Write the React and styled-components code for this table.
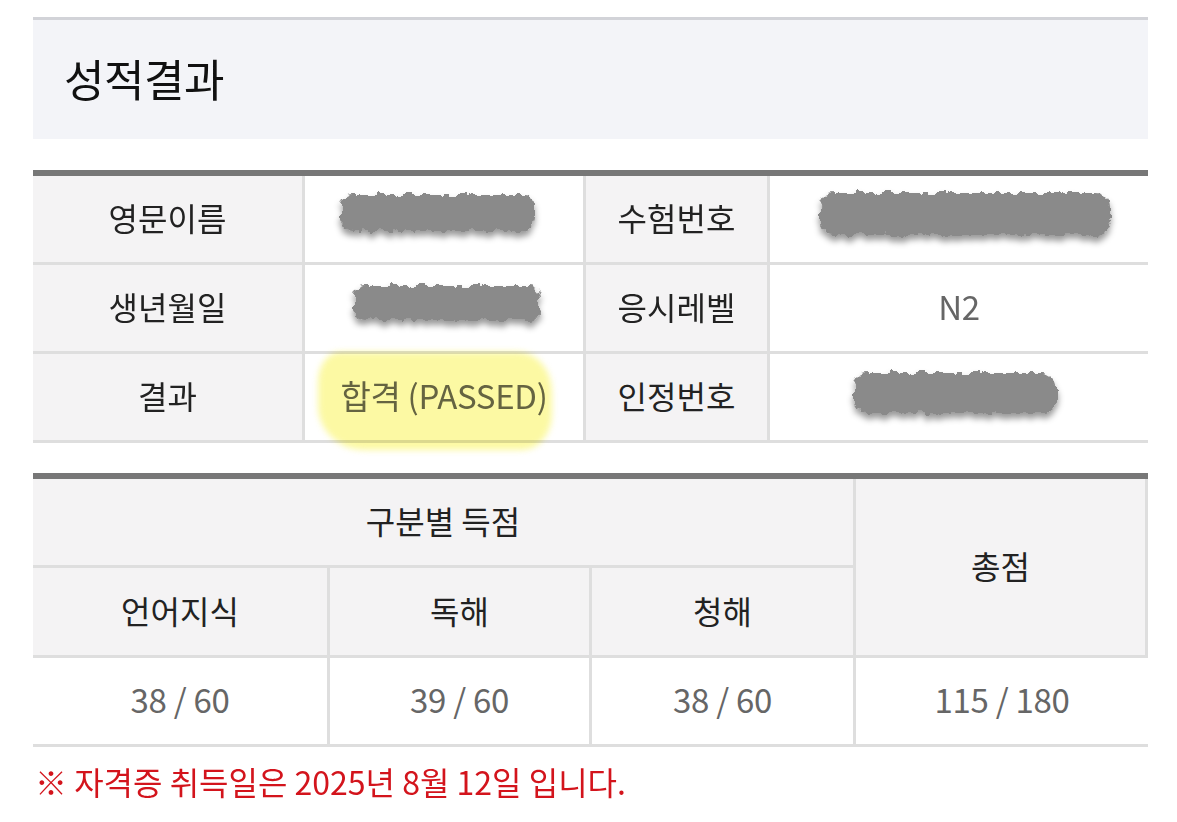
import { useId } from "react";
import styled, { createGlobalStyle } from "styled-components";

const GlobalStyle = createGlobalStyle`
  html, body {
    margin: 0;
    padding: 0;
    background: #ffffff;
  }

  body {
    font-family: "Noto Sans CJK KR", "Noto Sans", sans-serif;
    color: #222222;
  }
`;

const Page = styled.div`
  width: 1115px;
  padding: 17px 0 0 33px;
`;

const TitleBar = styled.div`
  height: 122px;
  border-top: 3px solid #d2d3d8;
  background: #f3f4f8;
  display: flex;
  align-items: center;
  padding: 0 0 4px 31px;
  box-sizing: border-box;
`;

const Title = styled.h1`
  margin: 0;
  font-size: 44px;
  font-weight: 400;
  color: #111111;
  letter-spacing: -0.5px;
`;

const InfoGrid = styled.div`
  margin-top: 31px;
  display: grid;
  grid-template-columns: 269px 278px 181px 1fr;
  grid-auto-rows: 86px;
  gap: 3px;
  padding-bottom: 3px;
  background: #dedede;
  border-top: 6px solid #777777;
`;

const ScoreGrid = styled.div`
  margin-top: 30px;
  display: grid;
  grid-template-columns: 294px 259px 261px 1fr;
  grid-template-rows: 86px 87px 86px;
  gap: 3px;
  padding-bottom: 3px;
  background: #dedede;
  border-top: 6px solid #777777;
`;

const Cell = styled.div`
  position: relative;
  display: flex;
  align-items: center;
  justify-content: center;
  padding-bottom: 4px;
  font-size: 32px;
  background: ${(p) => (p.$head ? "#f4f3f4" : "#ffffff")};
  color: ${(p) => (p.$head ? "#222222" : "#666666")};
  grid-column: ${(p) => p.$col || "auto"};
  grid-row: ${(p) => p.$row || "auto"};
  border-right: ${(p) => (p.$edge ? "3px solid #dedede" : "none")};
`;

const Value = styled.span`
  font-size: 33px;
  letter-spacing: -0.3px;
`;

const Highlight = styled.div`
  position: absolute;
  left: 13px;
  top: -2px;
  width: 234px;
  height: 98px;
  background: rgba(249, 242, 50, 0.45);
  border-radius: 22px 34px 30px 46px / 30px 40px 36px 44px;
  filter: blur(3px);
  mix-blend-mode: multiply;
  pointer-events: none;
`;

const Note = styled.p`
  margin: 14px 0 0 2px;
  font-size: 32px;
  line-height: 1.25;
  color: #d3141c;
`;

const Redacted = ({ w, h, dx = 0, dy = 0 }) => {
  const id = useId().replace(/:/g, "");
  return (
    <svg
      width={w + 20}
      height={h + 20}
      viewBox={`0 0 ${w + 20} ${h + 20}`}
      style={{ transform: `translate(${dx}px, ${dy}px)` }}
    >
      <defs>
        <filter id={`r${id}`} x="-10%" y="-30%" width="120%" height="170%">
          <feTurbulence type="fractalNoise" baseFrequency="0.11" numOctaves="3" seed="7" result="n" />
          <feDisplacementMap in="SourceGraphic" in2="n" scale="10" xChannelSelector="R" yChannelSelector="G" result="d" />
          <feDropShadow dx="0" dy="5" stdDeviation="3" floodColor="#000" floodOpacity="0.4" />
        </filter>
      </defs>
      <rect
        x="10"
        y="8"
        width={w}
        height={h - 6}
        rx={(h - 6) / 3}
        fill="#8a8a8a"
        filter={`url(#r${id})`}
      />
    </svg>
  );
};

export default function App() {
  return (
    <>
      <GlobalStyle />
      <Page>
        <TitleBar>
          <Title>성적결과</Title>
        </TitleBar>

        <InfoGrid>
          <Cell $head>영문이름</Cell>
          <Cell>
            <Redacted w={194} h={42} dx={-6} dy={1} />
          </Cell>
          <Cell $head>수험번호</Cell>
          <Cell>
            <Redacted w={290} h={48} dx={6} dy={2} />
          </Cell>

          <Cell $head>생년월일</Cell>
          <Cell>
            <Redacted w={186} h={40} dx={3} dy={2} />
          </Cell>
          <Cell $head>응시레벨</Cell>
          <Cell>
            <Value>N2</Value>
          </Cell>

          <Cell $head>결과</Cell>
          <Cell>
            <Value>합격 (PASSED)</Value>
            <Highlight />
          </Cell>
          <Cell $head>인정번호</Cell>
          <Cell>
            <Redacted w={202} h={46} dx={-4} dy={3} />
          </Cell>
        </InfoGrid>

        <ScoreGrid>
          <Cell $head $col="1 / 4" $row="1">
            구분별 득점
          </Cell>
          <Cell $head $edge $col="4" $row="1 / 3">
            총점
          </Cell>
          <Cell $head>언어지식</Cell>
          <Cell $head>독해</Cell>
          <Cell $head>청해</Cell>

          <Cell>
            <Value>38 / 60</Value>
          </Cell>
          <Cell>
            <Value>39 / 60</Value>
          </Cell>
          <Cell>
            <Value>38 / 60</Value>
          </Cell>
          <Cell>
            <Value>115 / 180</Value>
          </Cell>
        </ScoreGrid>

        <Note>※ 자격증 취득일은 2025년 8월 12일 입니다.</Note>
      </Page>
    </>
  );
}
